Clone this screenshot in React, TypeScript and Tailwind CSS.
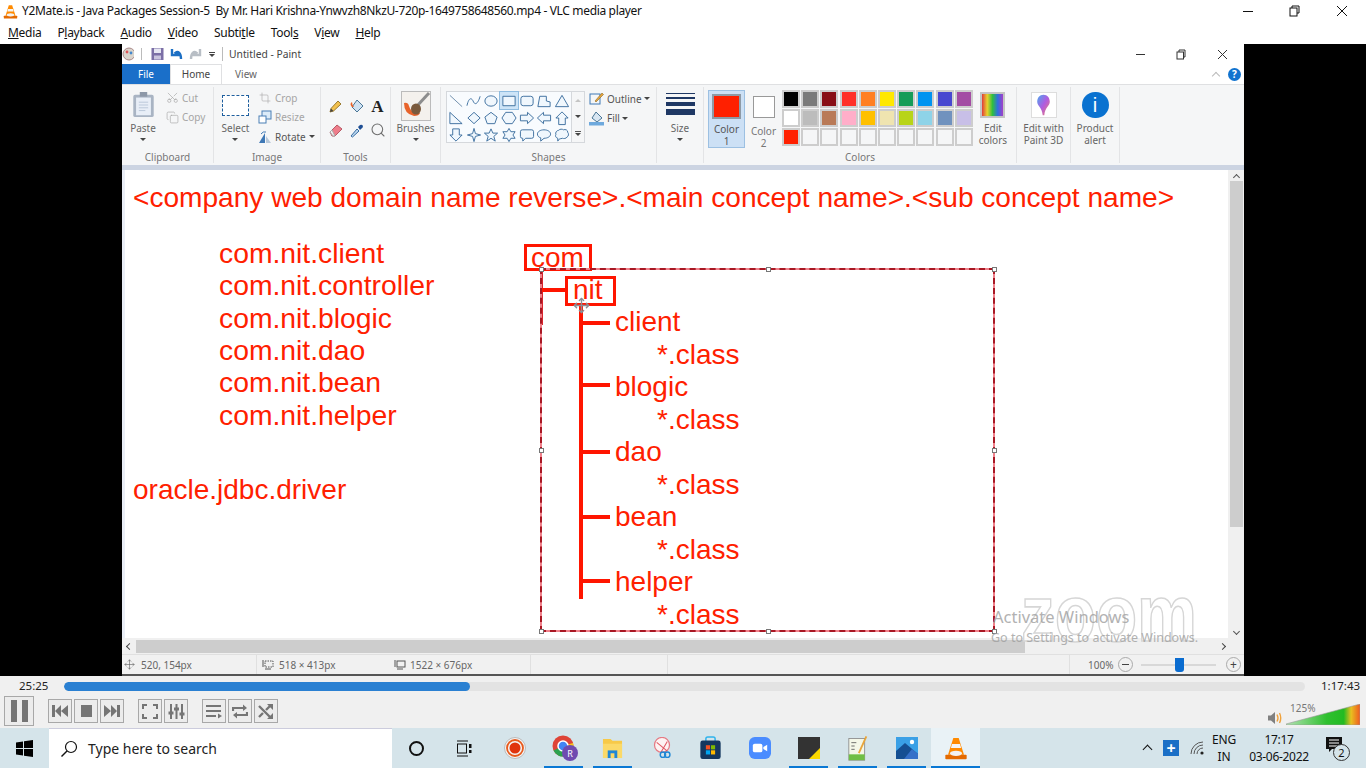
import React from "react";
import { Scissors, Copy, Crop, Search, Move } from "lucide-react";

const ui = "font-['Noto_Sans','Liberation_Sans',sans-serif]";

function Caret({ className = "" }: { className?: string }) {
  return <span className={`inline-block w-0 h-0 border-l-[3px] border-r-[3px] border-t-[3px] border-l-transparent border-r-transparent border-t-[#444] ${className}`} />;
}

function Group({ w, label, children }: { w: string; label: string; children: React.ReactNode }) {
  return (
    <div className={`${w} shrink-0 flex flex-col border-r border-[#e3e4e6] my-[2px]`}>
      <div className="h-[64px] flex">{children}</div>
      <div className="h-[13px] flex items-center justify-center text-[10px] text-[#777] leading-none">{label}</div>
    </div>
  );
}

function BigLabel({ children, caret }: { children: React.ReactNode; caret?: boolean }) {
  return (
    <div className="flex flex-col items-center text-[10px] leading-[12px] text-[#666] text-center">
      {children}
      {caret && <Caret className="mt-[4px]" />}
    </div>
  );
}

function Row({ icon, label, caret, dim }: { icon: React.ReactNode; label: string; caret?: boolean; dim?: boolean }) {
  return (
    <div className={`h-[19.5px] flex items-center gap-[2px] text-[10px] leading-none ${dim ? "text-[#a5a5a5]" : "text-[#555]"}`}>
      <span className="w-[16px] flex justify-center">{icon}</span>
      <span>{label}</span>
      {caret && <Caret className="ml-[1px]" />}
    </div>
  );
}

const sh = { fill: "#f0f7fd", stroke: "#3c6e9e", strokeWidth: 1, strokeLinejoin: "round" as const };
const shapes: React.ReactNode[] = [
  <path d="M2 2L15 14" {...sh} fill="none" stroke="#6d8caa" />,
  <path d="M1 13C3 4 6 4 8 9C10 13 13 10 15 3" {...sh} fill="none" />,
  <ellipse cx="8.5" cy="8" rx="6.5" ry="5.5" {...sh} />,
  <rect x="2" y="3" width="13" height="10" {...sh} />,
  <rect x="2" y="3" width="13" height="10" rx="2.5" {...sh} />,
  <path d="M2 14L4 3H11L11 8L15 9V14Z" {...sh} />,
  <path d="M8.5 2L15.5 14H1.5Z" {...sh} />,
  <path d="M2 2L15 14H2Z" {...sh} />,
  <path d="M8.5 2L15 8L8.5 14L2 8Z" {...sh} />,
  <path d="M8.5 2L15 7L12.5 14H4.5L2 7Z" {...sh} />,
  <path d="M5 2H12L16 8L12 14H5L1 8Z" {...sh} />,
  <path d="M1.5 5H9V2L15.5 8L9 14V11H1.5Z" {...sh} />,
  <path d="M15.5 5H8V2L1.5 8L8 14V11H15.5Z" {...sh} />,
  <path d="M5 15V8H2L8.5 1.5L15 8H12V15Z" {...sh} />,
  <path d="M5 1.5V8H2L8.5 14.5L15 8H12V1.5Z" {...sh} />,
  <path d="M8.5 1L10 6.5L15.5 8L10 9.5L8.5 15L7 9.5L1.5 8L7 6.5Z" {...sh} />,
  <path d="M8.5 1.5L10.5 6H15.5L11.5 9.5L13 14.5L8.5 11.5L4 14.5L5.5 9.5L1.5 6H6.5Z" {...sh} />,
  <path d="M8.5 1L10.5 4.5H15L12.7 8L15 11.5H10.5L8.5 15L6.5 11.5H2L4.3 8L2 4.5H6.5Z" {...sh} />,
  <path d="M3.5 2.5H13.5Q15.5 2.5 15.5 4.5V9.5Q15.5 11.5 13.5 11.5H7L4 14.5V11.5H3.5Q1.5 11.5 1.5 9.5V4.5Q1.5 2.5 3.5 2.5Z" {...sh} />,
  <path d="M8.5 2.5C12.5 2.5 15.5 4.5 15.5 7C15.5 9.5 12.5 11.5 8.5 11.5L5 14.5V11C3 10.5 1.5 9 1.5 7C1.5 4.5 4.5 2.5 8.5 2.5Z" {...sh} />,
  <path d="M5 3C6 1.5 9 1.5 10 2.5C12 1.5 15 3 14.5 5C16 6.5 15.5 9.5 14 10C13 12 10 12 9 11.5C7.5 12 6.5 12 6 12L4 14.5V11.5C2 11 1 9 2 7.5C1 5.5 3 3 5 3Z" {...sh} />,
];

const swatches = [
  "bg-[#000000]", "bg-[#7a7a7a]", "bg-[#880e15]", "bg-[#ff3028]", "bg-[#ff7f22]", "bg-[#ffe800]", "bg-[#169c58]", "bg-[#0094f0]", "bg-[#4848d0]", "bg-[#a34ca4]",
  "bg-[#ffffff]", "bg-[#bcbcbc]", "bg-[#b97a57]", "bg-[#ffaec9]", "bg-[#ffc000]", "bg-[#efe4b0]", "bg-[#b8d418]", "bg-[#8ed3e8]", "bg-[#7092be]", "bg-[#c8bfe7]",
  "bg-[#ff2000]", "bg-[#f5f6f7]", "bg-[#f5f6f7]", "bg-[#f5f6f7]", "bg-[#f5f6f7]", "bg-[#f5f6f7]", "bg-[#f5f6f7]", "bg-[#f5f6f7]", "bg-[#f5f6f7]", "bg-[#f5f6f7]",
];

function Ribbon() {
  return (
    <div className="h-[81px] bg-[#f5f6f7] flex border-t border-[#dfe0e2] border-b-0">
      <Group w="w-[92px]" label="Clipboard">
        <div className="w-[42px] flex flex-col items-center pt-[5px]">
          <svg width="23" height="26" viewBox="0 0 24 28" className="mb-[4px]">
            <rect x="1" y="3" width="22" height="24" rx="2" fill="#a9b4c3" />
            <rect x="4" y="6" width="16" height="19" fill="#e8eef7" />
            <path d="M7 11H17M7 14H17M7 17H17M7 20H14" stroke="#b8c6d8" />
            <rect x="8" y="0" width="8" height="5" fill="#8d98a8" />
          </svg>
          <BigLabel caret>Paste</BigLabel>
        </div>
        <div className="pt-[1px] flex flex-col">
          <Row dim icon={<Scissors size={13} strokeWidth={1.2} className="rotate-[-90deg]" />} label="Cut" />
          <Row dim icon={<Copy size={13} strokeWidth={1.2} />} label="Copy" />
        </div>
      </Group>
      <Group w="w-[107px]" label="Image">
        <div className="w-[43px] flex flex-col items-center pt-[8px]">
          <div className="w-[27px] h-[21px] border border-dashed border-[#1d5e9e] bg-white mb-[6px]" />
          <BigLabel caret>Select</BigLabel>
        </div>
        <div className="pt-[1px] flex flex-col">
          <Row dim icon={<Crop size={12} strokeWidth={1.2} />} label="Crop" />
          <Row dim icon={
            <svg width="14" height="14" viewBox="0 0 14 14"><rect x="4" y="1" width="9" height="8" fill="#dcebf8" stroke="#4a7fb5" /><rect x="1" y="6" width="7" height="7" fill="#fff" stroke="#4a7fb5" /></svg>
          } label="Resize" />
          <Row icon={
            <svg width="14" height="14" viewBox="0 0 14 14"><path d="M1 13L7 3V13Z" fill="#3f78b5" /><path d="M8 13V6L13 13Z" fill="#b9c9da" /><path d="M3 4Q5 1 8 2" fill="none" stroke="#3f78b5" /></svg>
          } label="Rotate" caret />
        </div>
      </Group>
      <Group w="w-[70px]" label="Tools">
        <div className="grid grid-cols-3 w-[63px] h-[48px] ml-[4px] mt-[7px] place-items-center">
          <svg width="15" height="15" viewBox="0 0 15 15"><path d="M2 13L3 9.5L10 2L13 5L5.5 12Z" fill="#f2c14e" stroke="#9a7a30" /><path d="M2 13L3 9.5L5.5 12Z" fill="#444" /></svg>
          <svg width="16" height="16" viewBox="0 0 16 16"><path d="M8 2L14 8L8 14L3 9Z" fill="#cfe2f3" stroke="#4a7696" /><path d="M3 9Q0 6 3 4Q3 7 5 9Z" fill="#e8632a" /></svg>
          <span className="font-['Liberation_Serif',serif] font-bold text-[17px] leading-none text-[#222]">A</span>
          <svg width="16" height="15" viewBox="0 0 16 15"><path d="M2 9L9 2L14 6L7 13H4Z" fill="#ee7d8b" stroke="#b85a66" /><path d="M2 9L5 13H7L4 7Z" fill="#f2f2f2" stroke="#aaa" /></svg>
          <svg width="15" height="15" viewBox="0 0 15 15"><path d="M2 13L8 6L10 8L3.5 14Z" fill="#bcd8f0" stroke="#356aa0" /><path d="M9 4L11 2Q13 1 14 3Q14 5 12 6L11 7Z" fill="#1f4f94" /></svg>
          <Search size={16} strokeWidth={1.6} className="text-[#6f6f6f]" />
        </div>
      </Group>
      <Group w="w-[50px]" label="">
        <div className="w-full flex flex-col items-center pt-[4px]">
          <svg width="30" height="30" viewBox="0 0 30 30" className="mb-[1px]">
            <rect x="0.5" y="0.5" width="29" height="29" fill="#f4f1ed" stroke="#bbb" />
            <path d="M3 12Q3 23 13 25Q18 25 19 22Q10 23 8 15Q7 11 3 12Z" fill="#e8632a" />
            <path d="M28 2L16 15" stroke="#8d8d8d" strokeWidth="3" />
            <ellipse cx="15" cy="18" rx="5" ry="5.5" fill="#7a5a3c" />
          </svg>
          <BigLabel caret>Brushes</BigLabel>
        </div>
      </Group>
      <Group w="w-[216px]" label="Shapes">
        <div className="flex pl-[5px] pt-[4px]">
          <div className="w-[126px] h-[52px] border border-[#d5d8dc] bg-[#f8fbfe] grid grid-cols-7 auto-rows-[17.3px]">
            {shapes.map((s, i) => (
              <div key={i} className={`flex items-center justify-center ${i === 3 ? "bg-[#cde4f7] outline outline-[#8fbce0]" : ""}`}>
                <svg width="16" height="16" viewBox="0 0 17 16">{s}</svg>
              </div>
            ))}
          </div>
          <div className="w-[13px] h-[52px] border border-l-0 border-[#d5d8dc] flex flex-col items-center justify-around">
            <span className="w-0 h-0 border-l-[3px] border-r-[3px] border-b-[3px] border-l-transparent border-r-transparent border-b-[#c4c4c4]" />
            <Caret />
            <div className="flex flex-col items-center gap-[1px]"><span className="w-[6px] h-[1px] bg-[#555]" /><Caret /></div>
          </div>
          <div className="pl-[4px] -mt-[2px] flex flex-col">
            <div className="h-[19.5px] flex items-center gap-[2px] text-[10px] leading-none text-[#555]">
              <svg width="15" height="15" viewBox="0 0 15 15" className="mr-[1px]"><rect x="1" y="3" width="10" height="10" fill="none" stroke="#3f78b5" /><path d="M6 10L13 2L14.5 3.5L7 11Z" fill="#e8a53b" stroke="#8a6a28" strokeWidth=".6" /></svg>
              <span>Outline</span><Caret />
            </div>
            <div className="h-[19.5px] flex items-center gap-[2px] text-[10px] leading-none text-[#555]">
              <svg width="15" height="15" viewBox="0 0 15 15" className="mr-[1px]"><path d="M7 1L13 7L8 11L3 7Z" fill="#d8e6f2" stroke="#4a7696" /><rect x="0" y="11" width="15" height="3.5" fill="#6ea9dd" /></svg>
              <span>Fill</span><Caret />
            </div>
          </div>
        </div>
      </Group>
      <Group w="w-[47px]" label="">
        <div className="w-full flex flex-col items-center pt-[6px]">
          <div className="w-[29px] h-[22px] flex flex-col gap-[3px] mb-[7px]">
            <div className="h-[1px] bg-[#1f3864]" />
            <div className="h-[2px] bg-[#1f3864]" />
            <div className="h-[4px] bg-[#1f3864]" />
            <div className="h-[6px] bg-[#1f3864]" />
          </div>
          <BigLabel caret>Size</BigLabel>
        </div>
      </Group>
      <Group w="w-[313px]" label="Colors">
        <div className="flex pt-[3px] pl-[4px]">
          <div className="w-[37px] h-[58px] bg-[#cce0f5] border border-[#9cc0e2] flex flex-col items-center pt-[3px]">
            <div className="w-[29px] h-[28px] bg-[#ff2000] border-2 border-[#8e9aa6] mb-[4px]" />
            <div className="text-[10px] leading-[12px] text-[#555] text-center">Color<br />1</div>
          </div>
          <div className="w-[37px] flex flex-col items-center pt-[6px]">
            <div className="w-[22px] h-[22px] bg-white border border-[#999] mb-[7px]" />
            <div className="text-[10px] leading-[12px] text-[#777] text-center">Color<br />2</div>
          </div>
          <div className="grid grid-cols-[repeat(10,19.2px)] auto-rows-[19.2px] mt-[0px] h-[58px]">
            {swatches.map((c, i) => (
              <div key={i} className={`w-[18px] h-[18px] border-2 border-[#cdcdcd] ${c}`} />
            ))}
          </div>
          <div className="w-[38px] flex flex-col items-center pt-[2px]">
            <div className="w-[25px] h-[26px] border-2 border-[#c4c4c4] bg-[linear-gradient(90deg,#e23b3b,#e9d22c,#2fbf3f,#2f6fe0,#a53fc9)] mb-[4px]" />
            <div className="text-[10px] leading-[12px] text-[#666] text-center">Edit<br />colors</div>
          </div>
        </div>
      </Group>
      <Group w="w-[54px]" label="">
        <div className="w-full flex flex-col items-center pt-[5px]">
          <div className="w-[26px] h-[26px] bg-white border border-[#ddd] flex items-center justify-center mb-[4px]">
            <svg width="15" height="22" viewBox="0 0 18 28">
              <defs><linearGradient id="p3d" x1="0" y1="0" x2="1" y2="1"><stop offset="0" stopColor="#4aa8f0" /><stop offset=".5" stopColor="#b05ce0" /><stop offset="1" stopColor="#f0806a" /></linearGradient></defs>
              <path d="M9 1C14 1 17 5 17 10C17 15 11 17 10 27L8 27C7 17 1 15 1 10C1 5 4 1 9 1Z" fill="url(#p3d)" />
            </svg>
          </div>
          <div className="text-[10px] leading-[12px] text-[#666] text-center whitespace-nowrap">Edit with<br />Paint 3D</div>
        </div>
      </Group>
      <Group w="w-[49px]" label="">
        <div className="w-full flex flex-col items-center pt-[5px]">
          <div className="w-[27px] h-[26px] rounded-full bg-[#0a72d0] text-white flex items-center justify-center text-[20px] leading-none font-['Liberation_Sans',sans-serif] mb-[4px]">i</div>
          <div className="text-[10px] leading-[12px] text-[#666] text-center">Product<br />alert</div>
        </div>
      </Group>
      <div className="flex-1" />
    </div>
  );
}

function PaintCanvas() {
  const red = "absolute whitespace-nowrap font-['Liberation_Sans',sans-serif] text-[#ff2000] leading-none";
  const handle = "absolute w-[5px] h-[5px] bg-white border border-[#777]";
  const stub = "absolute h-[4px] w-[29px] left-[459px] bg-[#ff1500]";
  return (
    <div className="relative flex-1 min-w-0 bg-white overflow-hidden">
      <div className="absolute left-0 top-0 bottom-0 w-[3px] bg-[#eaeef6]" />
      <span className={`${red} left-[11px] top-[14px] text-[28.08px]`}>&lt;company web domain name reverse&gt;.&lt;main concept name&gt;.&lt;sub concept name&gt;</span>
      <span className={`${red} left-[97px] top-[69px] text-[28.3px]`}>com.nit.client</span>
      <span className={`${red} left-[97px] top-[101px] text-[28.3px]`}>com.nit.controller</span>
      <span className={`${red} left-[97px] top-[134px] text-[28.3px]`}>com.nit.blogic</span>
      <span className={`${red} left-[97px] top-[166px] text-[28.3px]`}>com.nit.dao</span>
      <span className={`${red} left-[97px] top-[198px] text-[28.3px]`}>com.nit.bean</span>
      <span className={`${red} left-[97px] top-[231px] text-[28.3px]`}>com.nit.helper</span>
      <span className={`${red} left-[11px] top-[306px] text-[28px]`}>oracle.jdbc.driver</span>

      <div className="absolute left-[402px] top-[74px] w-[68px] h-[27px] border-[3px] border-[#ff1500]" />
      <span className={`${red} left-[409px] top-[74px] text-[28px]`}>com</span>
      <div className="absolute left-[443px] top-[106px] w-[51px] h-[30px] border-[3px] border-[#ff1500]" />
      <span className={`${red} left-[451px] top-[106px] text-[28px]`}>nit</span>
      <div className="absolute left-[418px] top-[100px] w-[3px] h-[55px] bg-[#d8242c]" />
      <div className="absolute left-[419px] top-[118px] w-[25px] h-[4px] bg-[#ff1500]" />
      <div className="absolute left-[457px] top-[135px] w-[4px] h-[294px] bg-[#ff1500]" />
      <div className={`${stub} top-[151px]`} />
      <div className={`${stub} top-[213px]`} />
      <div className={`${stub} top-[280px]`} />
      <div className={`${stub} top-[345px]`} />
      <div className={`${stub} top-[409px]`} />

      <span className={`${red} left-[493px] top-[138px] text-[28px]`}>client</span>
      <span className={`${red} left-[535px] top-[171px] text-[28px]`}>*.class</span>
      <span className={`${red} left-[493px] top-[203px] text-[28px]`}>blogic</span>
      <span className={`${red} left-[535px] top-[236px] text-[28px]`}>*.class</span>
      <span className={`${red} left-[493px] top-[268px] text-[28px]`}>dao</span>
      <span className={`${red} left-[535px] top-[301px] text-[28px]`}>*.class</span>
      <span className={`${red} left-[493px] top-[333px] text-[28px]`}>bean</span>
      <span className={`${red} left-[535px] top-[366px] text-[28px]`}>*.class</span>
      <span className={`${red} left-[493px] top-[398px] text-[28px]`}>helper</span>
      <span className={`${red} left-[535px] top-[431px] text-[28px]`}>*.class</span>

      <div className="absolute left-[418px] top-[98px] w-[455px] h-[364px] border-2 border-[#f0808a]">
        <div className="absolute -inset-[2px] border-2 border-dashed border-[#a81824]" />
      </div>
      <div className={`${handle} left-[417px] top-[97px]`} />
      <div className={`${handle} left-[644px] top-[97px]`} />
      <div className={`${handle} left-[870px] top-[97px]`} />
      <div className={`${handle} left-[417px] top-[278px]`} />
      <div className={`${handle} left-[870px] top-[278px]`} />
      <div className={`${handle} left-[417px] top-[459px]`} />
      <div className={`${handle} left-[644px] top-[459px]`} />
      <div className={`${handle} left-[870px] top-[459px]`} />
      <Move size={17} strokeWidth={2} className="absolute left-[451px] top-[127px] text-[#8a8f96]" />
    </div>
  );
}

function Paint() {
  return (
    <div className="w-[1122px] h-full flex flex-col bg-white">
      <div className="h-[20px] flex items-center text-[10.3px] text-[#444] relative">
        <svg width="12" height="14" viewBox="0 0 12 14"><circle cx="7" cy="7" r="6" fill="#d9d4cc" stroke="#a88" /><circle cx="5" cy="5" r="1.4" fill="#d55" /><circle cx="9" cy="6" r="1.4" fill="#48c" /></svg>
        <div className="w-px h-[12px] bg-[#bbb] ml-[7px]" />
        <svg width="13" height="14" viewBox="0 0 13 14" className="ml-[9px]"><rect x="0.5" y="1" width="12" height="12" fill="#7b6fa6" /><rect x="3" y="1.5" width="7" height="4.5" fill="#e6e6f2" /><rect x="3" y="8.5" width="7" height="4" fill="#c9c4de" /></svg>
        <svg width="14" height="14" viewBox="0 0 14 14" className="ml-[6px]"><path d="M2 2V8H8L5.6 5.8C8 4 11 6 11 12" fill="none" stroke="#1c6fc4" strokeWidth="2.4" /></svg>
        <svg width="14" height="14" viewBox="0 0 14 14" className="ml-[4px]"><path d="M12 2V8H6L8.4 5.8C6 4 3 6 3 12" fill="none" stroke="#b8bec5" strokeWidth="2.4" /></svg>
        <div className="ml-[7px] flex flex-col items-center gap-[1px]"><span className="w-[6px] h-px bg-[#444]" /><Caret /></div>
        <div className="w-px h-[14px] bg-[#bbb] ml-[7px]" />
        <span className="ml-[6px] mt-[1px]">Untitled - Paint</span>
        <div className="ml-auto flex items-center pr-[16px] gap-[31px]">
          <span className="w-[9px] h-px bg-[#333]" />
          <svg width="10" height="11" viewBox="0 0 10 11"><rect x="1" y="3" width="6.5" height="7" fill="none" stroke="#333" /><path d="M3 3V1H9V8H7.5" fill="none" stroke="#333" /></svg>
          <svg width="11" height="11" viewBox="0 0 11 11"><path d="M1 1L10 10M10 1L1 10" stroke="#333" /></svg>
        </div>
      </div>
      <div className="h-[20px] flex items-end text-[10px] relative">
        <div className="w-[48px] h-[20px] bg-[#1a6fc9] text-white flex items-center justify-center">File</div>
        <div className="w-[52px] h-[20px] border border-b-0 border-[#dfe0e2] text-[#444] flex items-center justify-center">Home</div>
        <div className="w-[48px] h-[20px] text-[#666] flex items-center justify-center">View</div>
        <div className="ml-auto flex items-center self-center gap-[9px] pr-[3px]">
          <span className="w-[6px] h-[6px] border-l border-t border-[#bbb] rotate-45 mt-[3px]" />
          <span className="w-[13px] h-[13px] rounded-full bg-[#1173cf] text-white text-[10px] font-bold flex items-center justify-center leading-none">?</span>
        </div>
      </div>
      <Ribbon />
      <div className="h-[5px] bg-[#ccd4e2]" />
      <div className="flex-1 min-h-0 flex">
        <PaintCanvas />
        <div className="w-[16px] bg-[#f0f0f0] flex flex-col items-center">
          <span className="h-[11px] text-[#666] flex items-center"><span className="w-[5px] h-[5px] border-l border-t border-[#555] rotate-45 mt-[3px]" /></span>
          <div className="w-[13px] h-[346px] bg-[#cdcdcd]" />
          <span className="mt-auto mb-[4px] w-[5px] h-[5px] border-r border-b border-[#555] rotate-45" />
        </div>
      </div>
      <div className="h-[16px] bg-[#f0f0f0] flex items-center">
        <span className="w-[14px] flex justify-center"><span className="w-[5px] h-[5px] border-l border-b border-[#444] rotate-45" /></span>
        <div className="w-[889px] h-[13px] bg-[#cdcdcd]" />
        <span className="ml-auto mr-[19px] w-[5px] h-[5px] border-r border-t border-[#444] rotate-45" />
      </div>
      <div className="h-[22px] bg-[#f1f1f1] border-t border-[#e0e0e0] border-b-2 border-b-[#555] flex items-center text-[10px] text-[#666] leading-none">
        <div className="w-[135px] h-full flex items-center border-r border-[#e0e0e0] pl-[2px]">
          <Move size={11} strokeWidth={1.4} className="mr-[6px]" /><span>520, 154px</span>
        </div>
        <div className="w-[137px] h-full flex items-center pl-[5px]">
          <svg width="12" height="12" viewBox="0 0 12 12" className="mr-[5px]"><path d="M1 1V8M9 10H3" stroke="#555" /><rect x="3" y="2" width="8" height="6" fill="none" stroke="#555" strokeDasharray="1.5 1" /></svg>
          <span>518 × 413px</span>
        </div>
        <div className="w-[137px] h-full flex items-center border-r border-[#e0e0e0]">
          <svg width="12" height="12" viewBox="0 0 12 12" className="mr-[4px]"><path d="M1 1V8M9 10H3" stroke="#555" /><rect x="3" y="2" width="8" height="6" fill="none" stroke="#555" /></svg>
          <span>1522 × 676px</span>
        </div>
        <div className="w-[137px] h-full border-r border-[#e0e0e0]" />
        <div className="w-[402px] h-full border-r border-[#e0e0e0]" />
        <div className="flex-1 flex items-center pl-[18px]">
          <span className="w-[24px]">100%</span>
          <span className="ml-[6px] w-[15px] h-[15px] rounded-full border border-[#aaa] flex items-center justify-center"><span className="w-[7px] h-px bg-[#444]" /></span>
          <div className="relative ml-[8px] w-[75px] h-[2px] bg-[#d8d8d8]">
            <span className="absolute left-[34px] -top-[6px] w-[9px] h-[14px] bg-[#0a6cd0] rounded-b-[3px]" />
          </div>
          <span className="ml-[10px] w-[15px] h-[15px] rounded-full border border-[#aaa] flex items-center justify-center text-[12px] text-[#444]">+</span>
        </div>
      </div>
    </div>
  );
}

function VlcCone({ size = 17 }: { size?: number }) {
  return (
    <svg width={size} height={size} viewBox="0 0 18 18">
      <path d="M7 1.5H11L15 14H3Z" fill="#ff8a00" />
      <path d="M6 6H12L12.8 9H5.2Z" fill="#f4f4f4" />
      <rect x="1" y="14" width="16" height="3.5" rx="0.6" fill="#e46a00" />
      <ellipse cx="9" cy="13" rx="4.5" ry="2" fill="#f2f2f2" />
    </svg>
  );
}

function Ctl({ children }: { children: React.ReactNode }) {
  return <div className="w-[24px] h-[24px] border border-[#a8a8a8] bg-[#ececec] flex items-center justify-center">{children}</div>;
}

function Controls() {
  const g = "#757575";
  return (
    <div className="h-[52px] bg-[#f0f0f0] flex flex-col">
      <div className="h-[20px] flex items-center text-[11.5px] text-[#222] relative">
        <span className="w-[64px] pl-[19px]">25:25</span>
        <div className="w-[1241px] h-[9px] mt-[1px] rounded-full bg-[#e3e3e3] overflow-hidden">
          <div className="w-[406px] h-full bg-[#2a80d2] rounded-full" />
        </div>
        <span className="ml-[16px]">1:17:43</span>
      </div>
      <div className="flex-1 flex items-start pl-[4px] relative">
        <div className="w-[30px] h-[30px] border border-[#a8a8a8] bg-[#ececec] flex items-center justify-center gap-[5px]">
          <span className="w-[6px] h-[22px] bg-[#757575]" /><span className="w-[6px] h-[22px] bg-[#757575]" />
        </div>
        <div className="flex gap-[2px] ml-[14px] mt-[3px]">
          <Ctl><svg width="16" height="12" viewBox="0 0 16 12"><path d="M0 0H3V12H0ZM3 6L9 0V12ZM9 6L16 0V12Z" fill={g} /></svg></Ctl>
          <Ctl><span className="w-[11px] h-[12px] bg-[#757575]" /></Ctl>
          <Ctl><svg width="16" height="12" viewBox="0 0 16 12"><path d="M16 0H13V12H16ZM13 6L7 0V12ZM7 6L0 0V12Z" fill={g} /></svg></Ctl>
        </div>
        <div className="flex gap-[2px] ml-[14px] mt-[3px]">
          <Ctl><svg width="16" height="15" viewBox="0 0 16 15"><path d="M1 5V1H5M11 1H15V5M15 10V14H11M5 14H1V10" fill="none" stroke={g} strokeWidth="2" /></svg></Ctl>
          <Ctl><svg width="17" height="15" viewBox="0 0 17 15"><path d="M3 0V15M8.5 0V15M14 0V15" stroke={g} strokeWidth="2" /><path d="M0.5 9H5.5M6 5H11M11.5 10H16.5" stroke={g} strokeWidth="3" /></svg></Ctl>
        </div>
        <div className="flex gap-[2px] ml-[14px] mt-[3px]">
          <Ctl><svg width="16" height="15" viewBox="0 0 16 15"><path d="M0 2H15M0 7H15M0 12H10" stroke={g} strokeWidth="2.2" /><path d="M12 9.5L16 12L12 14.5Z" fill={g} /></svg></Ctl>
          <Ctl><svg width="16" height="15" viewBox="0 0 16 15"><path d="M1 7V4H12M15 8V11H4" fill="none" stroke={g} strokeWidth="2.2" /><path d="M11 0.5L15 4L11 7ZM5 8L1 11L5 14.5Z" fill={g} /></svg></Ctl>
          <Ctl><svg width="16" height="15" viewBox="0 0 16 15"><path d="M1 2L12 13M1 13L5 9M8 6L12 2" stroke={g} strokeWidth="2.4" /><path d="M9 0H15V6ZM9 15H15V9Z" fill={g} /></svg></Ctl>
        </div>
        <div className="ml-auto mt-[8px] mr-[6px] flex items-end gap-[3px] relative">
          <svg width="16" height="14" viewBox="0 0 16 14"><path d="M1 4.5H4L8 1V13L4 9.5H1Z" fill="#808080" /><path d="M10 3.5Q12 7 10 10.5M12.5 2Q15 7 12.5 12" fill="none" stroke="#f0a23c" strokeWidth="1.4" /></svg>
          <div className="relative w-[74px] h-[21px]">
            <svg width="74" height="21" viewBox="0 0 74 21" className="block">
              <defs><linearGradient id="vol" x1="0" x2="1" y1="0" y2="0"><stop offset="0" stopColor="#b4e2b4" /><stop offset=".55" stopColor="#2fc02f" /><stop offset=".78" stopColor="#22bb22" /><stop offset=".88" stopColor="#e8c020" /><stop offset="1" stopColor="#f05a20" /></linearGradient></defs>
              <path d="M0 20L74 0V21H0Z" fill="url(#vol)" stroke="#999" strokeWidth="0.6" />
            </svg>
            <span className="absolute left-[4px] top-[-1px] text-[10px] leading-none text-[#777]">125%</span>
          </div>
        </div>
      </div>
    </div>
  );
}

function TaskIcon({ children, bar, active }: { children: React.ReactNode; bar?: boolean; active?: boolean }) {
  return (
    <div className={`w-[49px] h-full relative flex items-center justify-center ${active ? "bg-[#e9f2f6]" : ""}`}>
      {children}
      {bar && <span className={`absolute bottom-0 h-[2px] bg-[#0a78d4] ${active ? "left-0 right-0" : "left-[5px] right-[5px]"}`} />}
    </div>
  );
}

function Taskbar() {
  return (
    <div className="h-[40px] bg-[#d5e4ea] flex items-center">
      <div className="w-[49px] flex justify-center">
        <svg width="17" height="17" viewBox="0 0 17 17"><path d="M0 2.4L7 1.4V8H0ZM8 1.2L17 0V8H8ZM0 9H7V15.6L0 14.6ZM8 9H17V17L8 15.8Z" fill="#000" /></svg>
      </div>
      <div className="w-[343px] h-[40px] bg-white flex items-center border-t border-[#ccd] text-[14px] text-[#222]">
        <svg width="18" height="18" viewBox="0 0 18 18" className="ml-[11px] mr-[10px]"><circle cx="11" cy="7" r="5.5" fill="none" stroke="#111" strokeWidth="1.2" /><path d="M7 11L1.5 16.5" stroke="#111" strokeWidth="1.4" /></svg>
        Type here to search
      </div>
      <TaskIcon><span className="w-[15px] h-[15px] rounded-full border-[2.5px] border-[#111]" /></TaskIcon>
      <TaskIcon>
        <svg width="17" height="17" viewBox="0 0 17 17" className="-ml-[3px]"><path d="M1 1H12M1 16H12" stroke="#111" /><rect x="1.5" y="4" width="9" height="9" fill="none" stroke="#111" /><rect x="13" y="4" width="2.5" height="4" fill="#111" /><rect x="13" y="10" width="2.5" height="3" fill="#111" /></svg>
      </TaskIcon>
      <TaskIcon>
        <svg width="22" height="22" viewBox="0 0 22 22"><circle cx="11" cy="11" r="10.5" fill="#f3f3f3" stroke="#bbb" /><circle cx="11" cy="11" r="8" fill="none" stroke="#e85a1c" strokeWidth="1.8" /><circle cx="11" cy="11" r="5.5" fill="#e0330c" /></svg>
      </TaskIcon>
      <TaskIcon bar>
        <div className="relative w-[26px] h-[26px] ml-[3px]">
          <svg width="22" height="22" viewBox="0 0 22 22" className="absolute left-0 top-0"><circle cx="11" cy="11" r="10.5" fill="#de4437" /><path d="M11 11L1.5 15.5A10.5 10.5 0 0 0 13 21.4Z" fill="#2ca24f" /><path d="M11 11L13 21.4A10.5 10.5 0 0 0 21 8Z" fill="#f7c518" /><circle cx="11" cy="11" r="5" fill="#4285f4" stroke="#fff" strokeWidth="1.5" /></svg>
          <span className="absolute right-0 bottom-0 w-[16px] h-[16px] rounded-full bg-[#6f4bb0] text-white text-[9px] flex items-center justify-center leading-none">R</span>
        </div>
      </TaskIcon>
      <TaskIcon bar>
        <svg width="21" height="21" viewBox="0 0 22 22"><path d="M1 1H9L11 3H21V21H1Z" fill="#f7c948" /><path d="M1 6H21V21H1Z" fill="#fbd968" /><rect x="6" y="13" width="10" height="8" fill="#1f87d6" /><rect x="9" y="16" width="4" height="5" fill="#fbd968" /></svg>
      </TaskIcon>
      <TaskIcon>
        <svg width="26" height="23" viewBox="0 0 24 26"><circle cx="12" cy="9" r="8.5" fill="#fdf3f3" stroke="#e57a84" strokeWidth="1.4" /><path d="M6 6L18 16M18 5L11 17" stroke="#e05a66" strokeWidth="1.2" /><circle cx="13" cy="20" r="3" fill="none" stroke="#1f87d6" strokeWidth="1.6" /><circle cx="18" cy="20" r="3" fill="none" stroke="#1f87d6" strokeWidth="1.6" /></svg>
      </TaskIcon>
      <TaskIcon>
        <svg width="23" height="24" viewBox="0 0 24 26"><path d="M7 6V3Q7 1 9 1H15Q17 1 17 3V6" fill="none" stroke="#2fb3ec" strokeWidth="1.6" /><rect x="1" y="5" width="22" height="20" rx="2.5" fill="#14375f" /><rect x="7" y="10" width="4.5" height="4.5" fill="#f25022" /><rect x="12.5" y="10" width="4.5" height="4.5" fill="#7fba00" /><rect x="7" y="15.5" width="4.5" height="4.5" fill="#00a4ef" /><rect x="12.5" y="15.5" width="4.5" height="4.5" fill="#ffb900" /></svg>
      </TaskIcon>
      <TaskIcon>
        <svg width="22" height="22" viewBox="0 0 23 23"><rect width="23" height="23" rx="6" fill="#4a8cff" /><rect x="4" y="7" width="10" height="9" rx="2" fill="#fff" /><path d="M15 10.5L19 8V15L15 12.5Z" fill="#fff" /></svg>
      </TaskIcon>
      <TaskIcon bar>
        <svg width="22" height="22" viewBox="0 0 22 22"><rect width="22" height="22" fill="#333" /><path d="M11 22L22 11V22Z" fill="#fbd800" /></svg>
      </TaskIcon>
      <TaskIcon bar>
        <svg width="24" height="25" viewBox="0 0 24 30"><rect x="1" y="3" width="19" height="26" fill="#f4f7e8" stroke="#888" /><rect x="1" y="22" width="19" height="7" fill="#6fbf45" /><path d="M4 8H10M4 12H8M4 16H8" stroke="#555" /><path d="M23 1L14 21L12 20L21 0Z" fill="#e8a53b" /></svg>
      </TaskIcon>
      <TaskIcon bar>
        <svg width="22" height="22" viewBox="0 0 22 22"><rect width="22" height="22" fill="#3aa0e6" /><circle cx="16" cy="5" r="2.2" fill="#fff" /><path d="M0 14L9 6L22 17V22H0Z" fill="#154f92" /><path d="M8 22L16 12L22 17V22Z" fill="#3570c8" /></svg>
      </TaskIcon>
      <TaskIcon bar active><VlcCone size={24} /></TaskIcon>

      <div className="ml-auto flex items-center h-full text-[#111]">
        <span className="w-[7px] h-[7px] border-l-[1.5px] border-t-[1.5px] border-[#111] rotate-45 mt-[3px] mr-[12px]" />
        <span className="w-[16px] h-[16px] bg-[#1b6fc6] text-white flex items-center justify-center text-[16px] font-bold leading-none mr-[11px]">+</span>
        <svg width="14" height="14" viewBox="0 0 14 14" className="mr-[7px]"><path d="M1 13A12 12 0 0 1 13 1M4 13A9 9 0 0 1 13 4M7 13A6 6 0 0 1 13 7" fill="none" stroke="#555" /><circle cx="12" cy="12" r="1.6" fill="#222" /></svg>
        <div className="w-[26px] text-center text-[12px] leading-[17px] tracking-[-0.2px]">ENG<br />IN</div>
        <div className="w-[70px] ml-[7px] text-center text-[12px] leading-[17px] tracking-[-0.3px]">17:17<br />03-06-2022</div>
        <div className="relative w-[30px] ml-[12px] mr-[10px] h-[24px]">
          <svg width="16" height="16" viewBox="0 0 16 16" className="absolute left-0 top-[1px]"><path d="M0 0H16V12H6L3 15V12H0Z" fill="#111" /><path d="M3 3H13M3 6H13M3 9H13" stroke="#fff" /></svg>
          <span className="absolute left-[7px] top-[8px] w-[17px] h-[17px] rounded-full bg-[#d5e4ea] border border-[#333] flex items-center justify-center text-[11px] leading-none">2</span>
        </div>
      </div>
    </div>
  );
}

export default function App() {
  return (
    <div className={`w-[1366px] h-[768px] overflow-hidden flex flex-col bg-white ${ui}`}>
      <div className="h-[22px] flex items-center text-[12px] tracking-[-0.34px] text-[#111] bg-white">
        <span className="ml-[3px] mr-[3px]"><VlcCone size={15} /></span>
        <span className="ml-[1px]">Y2Mate.is - Java Packages Session-5 &nbsp;By Mr. Hari Krishna-Ynwvzh8NkzU-720p-1649758648560.mp4 - VLC media player</span>
        <div className="ml-auto flex items-center pr-[18px] gap-[36px]">
          <span className="w-[10px] h-px bg-[#111]" />
          <svg width="11" height="12" viewBox="0 0 11 12"><rect x="1" y="3" width="7" height="8" fill="none" stroke="#111" /><path d="M3 3V1H10V8H8" fill="none" stroke="#111" /></svg>
          <svg width="12" height="12" viewBox="0 0 12 12"><path d="M1 1L11 11M11 1L1 11" stroke="#111" /></svg>
        </div>
      </div>
      <div className="h-[22px] flex items-center gap-[16px] pl-[8px] text-[12px] tracking-[-0.3px] text-[#111] bg-white">
        <span><u>M</u>edia</span>
        <span>P<u>l</u>ayback</span>
        <span><u>A</u>udio</span>
        <span><u>V</u>ideo</span>
        <span>Subti<u>t</u>le</span>
        <span>Tool<u>s</u></span>
        <span>V<u>i</u>ew</span>
        <span><u>H</u>elp</span>
      </div>
      <div className="relative h-[632px] bg-black pl-[122px]">
        <Paint />
        <svg width="178" height="90" viewBox="0 0 178 90" className="absolute left-[1021px] top-[512px]">
          <text x="0" y="85" fontFamily="Liberation Sans, sans-serif" fontWeight="700" fontSize="80" fill="#ffffff" fillOpacity="0.75" stroke="#d6d6d6" strokeWidth="1.6" textLength="176" lengthAdjust="spacingAndGlyphs">zoom</text>
        </svg>
        <span className="absolute left-[993px] top-[565px] text-[16.5px] leading-none text-[#a0a0a0] opacity-80">Activate Windows</span>
        <span className="absolute left-[991px] top-[588px] text-[12.5px] leading-none text-[#a0a0a0] opacity-80">Go to Settings to activate Windows.</span>
      </div>
      <Controls />
      <Taskbar />
    </div>
  );
}
